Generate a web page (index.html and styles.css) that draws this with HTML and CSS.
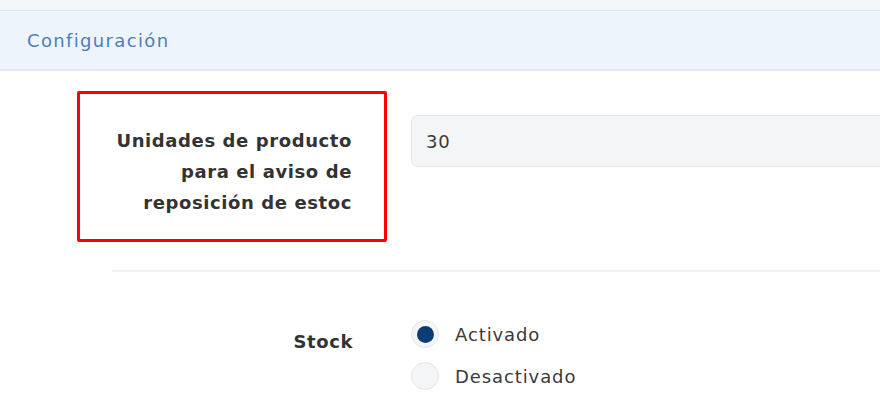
FILE: index.html
```html
<!DOCTYPE html>
<html lang="es">
<head>
<meta charset="utf-8">
<link rel="stylesheet" href="styles.css">
</head>
<body>
<div class="topbar"></div>
<div class="header">Configuración</div>
<div class="form">
  <div class="row row-first">
    <div class="label label-box">Unidades de producto<br>para el aviso de<br>reposición de estoc</div>
    <div class="input">30</div>
  </div>
  <div class="divider"></div>
  <div class="row row-second">
    <div class="label label-plain">Stock</div>
    <div class="radios">
      <div class="radio-item"><span class="radio checked"></span><span class="radio-text">Activado</span></div>
      <div class="radio-item"><span class="radio"></span><span class="radio-text">Desactivado</span></div>
    </div>
  </div>
</div>
</body>
</html>
```
FILE: styles.css
```css
html, body {
  margin: 0;
  padding: 0;
  background: #ffffff;
  overflow: hidden;
  width: 880px;
  height: 419px;
}
body {
  font-family: "DejaVu Sans", "Noto Sans", sans-serif;
  color: #3a3a3a;
}
.topbar {
  height: 10px;
  background: #f4f5f7;
  border-bottom: 1px solid #e2e7ef;
}
.header {
  box-sizing: border-box;
  height: 60px;
  background: #eef4fc;
  border-bottom: 2px solid #e3e8ef;
  padding-left: 27px;
  padding-top: 1px;
  display: flex;
  align-items: center;
  font-size: 18px;
  letter-spacing: 1.35px;
  color: #4d7fb8;
}
.form {
  padding-left: 77px;
}
.row {
  display: flex;
  align-items: flex-start;
}
.row-first {
  margin-top: 20px;
}
.label {
  box-sizing: border-box;
  flex: 0 0 310px;
  width: 310px;
  text-align: right;
  font-weight: bold;
  font-size: 18px;
  letter-spacing: 0.6px;
  line-height: 31px;
  color: #333333;
  white-space: nowrap;
}
.label-box {
  border: 3px solid #ff0000;
  border-radius: 2px;
  padding: 31px 32px 21px 0;
}
.label-plain {
  padding-right: 34px;
  margin-top: 6px;
}
.input {
  box-sizing: border-box;
  flex: 1 1 auto;
  margin-left: 24px;
  margin-top: 24px;
  height: 52px;
  background: #f4f5f7;
  border: 1px solid #e4e6ea;
  border-right: none;
  border-radius: 7px 0 0 7px;
  padding-left: 14px;
  display: flex;
  align-items: center;
  font-size: 18px;
  letter-spacing: 0.8px;
  color: #3a3a3a;
}
.divider {
  margin-top: 28px;
  margin-left: 35px;
  height: 2px;
  background: #f0f1f3;
}
.row-second {
  margin-top: 48px;
}
.radios {
  margin-left: 24px;
  display: flex;
  flex-direction: column;
  gap: 14px;
}
.radio-item {
  display: flex;
  align-items: center;
  gap: 16px;
  font-size: 18px;
  letter-spacing: 0.9px;
  color: #3a3a3a;
}
.radio {
  box-sizing: border-box;
  flex: 0 0 28px;
  width: 28px;
  height: 28px;
  border-radius: 50%;
  background: #f4f5f7;
  border: 1px solid #e4e6ea;
  display: flex;
  align-items: center;
  justify-content: center;
}
.radio.checked::after {
  content: "";
  width: 17px;
  height: 17px;
  border-radius: 50%;
  background: #0a3c78;
}
```
